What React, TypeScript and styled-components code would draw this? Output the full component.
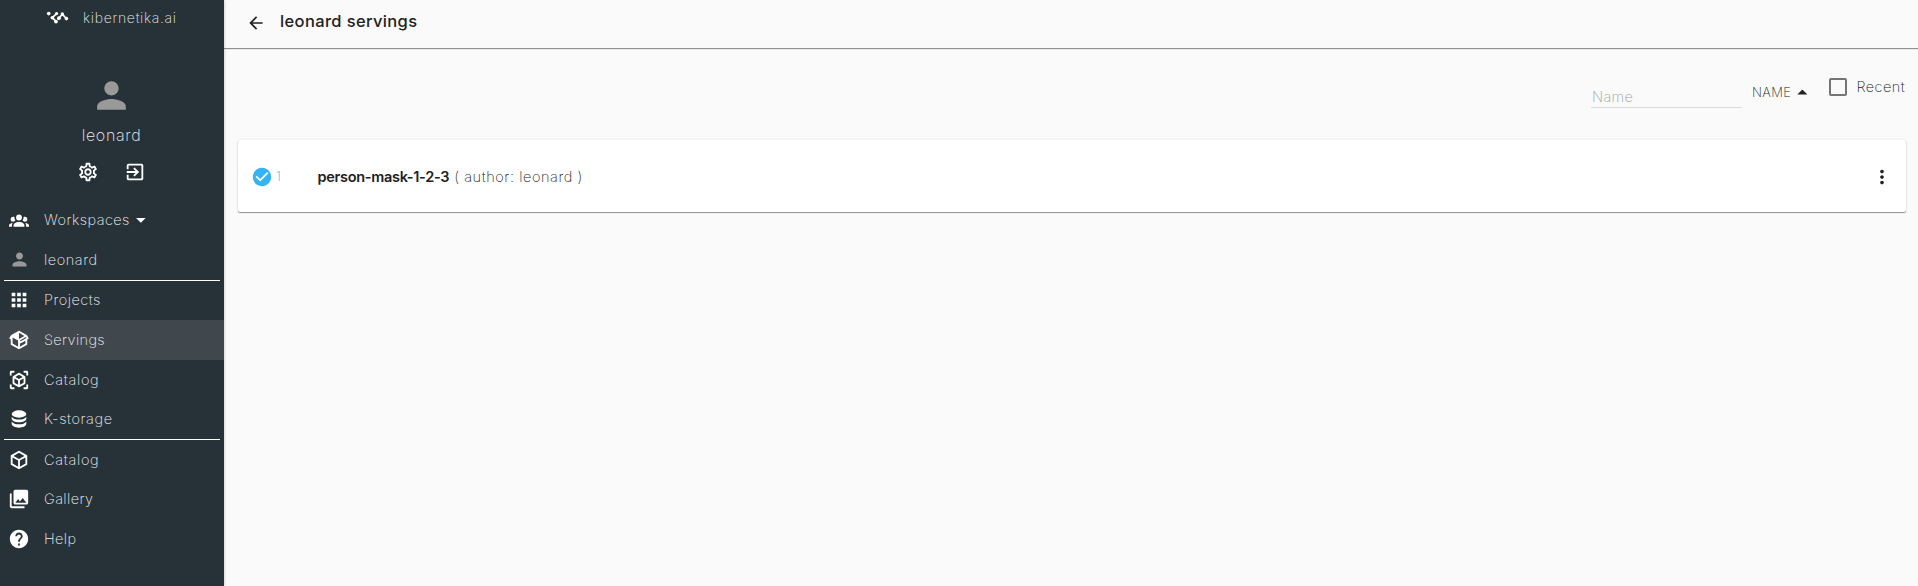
import React from "react";
import styled, { createGlobalStyle } from "styled-components";
import {
  MdArrowBack,
  MdCheckCircle,
  MdExitToApp,
  MdHelp,
  MdMoreVert,
  MdOutlineSettings,
  MdPerson,
  MdPhotoLibrary,
  MdApps,
} from "react-icons/md";

const GlobalStyle = createGlobalStyle`
  * { box-sizing: border-box; }
  html, body { margin: 0; height: 100%; overflow: hidden; }
  body { background: #fafafa; font-family: Inter, "Open Sans", sans-serif; font-weight: 300; color: #212121; }
`;

const Shell = styled.div`
  display: flex;
  height: 100vh;
`;

const Sidebar = styled.aside`
  width: 224px;
  flex: none;
  background: #263238;
  color: #fff;
  box-shadow: 0 0 3px rgba(0, 0, 0, 0.25);
  z-index: 1;
`;

const Label = styled.span<{ $size: number; $spacing?: number; $color?: string; $weight?: number }>`
  font-size: ${(p) => p.$size}px;
  line-height: 20px;
  letter-spacing: ${(p) => p.$spacing ?? 0}px;
  color: ${(p) => p.$color ?? "inherit"};
  font-weight: ${(p) => p.$weight ?? 200};
  white-space: pre;
`;

const Brand = styled.div`
  display: flex;
  align-items: center;
  height: 35px;
  padding-left: 46px;
  gap: 14px;
`;

const Profile = styled.div`
  display: flex;
  flex-direction: column;
  align-items: center;
  height: 165.5px;
  padding: 39px 1px 0 0;
  svg { display: block; }
`;

const ProfileName = styled.div`
  margin-top: 8px;
  height: 20px;
`;

const ProfileActions = styled.div`
  display: flex;
  gap: 25px;
  margin-top: 16px;
`;

const Item = styled.div<{ $active?: boolean }>`
  display: flex;
  align-items: center;
  height: 39.6px;
  background: ${(p) => (p.$active ? "#40484e" : "transparent")};
`;

const ItemIcon = styled.span<{ $muted?: boolean }>`
  display: flex;
  justify-content: center;
  width: 38px;
  margin-right: 6px;
  color: ${(p) => (p.$muted ? "#999" : "#fff")};
`;

const Divider = styled.div`
  height: 1px;
  margin: 0 4px;
  background: #fff;
`;

const Caret = styled.span<{ $up?: boolean }>`
  width: 10px;
  height: 5px;
  background: currentColor;
  clip-path: ${(p) => (p.$up ? "polygon(0 100%, 50% 0, 100% 100%)" : "polygon(0 0, 100% 0, 50% 100%)")};
  margin-left: 6px;
`;

const Main = styled.main`
  flex: 1;
  min-width: 0;
`;

const Header = styled.header`
  display: flex;
  align-items: center;
  height: 48px;
  padding: 0 0 3px 22px;
  gap: 14px;
  box-shadow: 0 1px 1px rgba(0, 0, 0, 0.42);
`;

const Title = styled.h1`
  display: flex;
  margin: 0 0 3px;
`;

const Toolbar = styled.div`
  display: flex;
  justify-content: flex-end;
  height: 92px;
  padding: 28px 13px 0 0;
`;

const SearchField = styled.div`
  width: 151px;
  height: 32px;
  padding: 10px 0 0 1px;
  border-bottom: 1px solid #dcdcdc;
`;

const SortButton = styled.div`
  display: flex;
  align-items: center;
  height: 20px;
  margin: 6px 0 0 10px;
`;

const RecentToggle = styled.label`
  display: flex;
  align-items: center;
  height: 20px;
  margin: 1px 0 0 22px;
  gap: 9px;
`;

const Box = styled.span`
  width: 18px;
  height: 18px;
  border: 2px solid #757575;
  border-radius: 2px;
`;

const Card = styled.section`
  display: flex;
  align-items: center;
  height: 72px;
  margin: 0 12px 0 14px;
  padding: 1px 13px 0 13px;
  background: #fff;
  border-radius: 2px;
  box-shadow: 0 1px 1px rgba(0, 0, 0, 0.4), 0 0 2px rgba(0, 0, 0, 0.16);
`;

const Status = styled.div`
  display: flex;
  align-items: center;
  width: 66.5px;
  gap: 3px;
  color: #33b5f5;
`;

const ServingName = styled.div`
  display: flex;
  flex: 1;
  gap: 5px;
`;

const Logo = () => (
  <svg width="23" height="14" viewBox="0 0 23 14" fill="none" stroke="#fff" strokeLinecap="round" strokeLinejoin="round">
    <path d="M10.5 2.7 6.4 6.6l3.6 3.8M13.1 7.3l3.2-4.2 4.2 4.6" strokeWidth="1.7" />
    <g fill="#fff" stroke="none">
      <circle cx="2.7" cy="2.6" r="1.8" />
      <circle cx="10.6" cy="2.6" r="1.6" />
      <circle cx="6.3" cy="6.7" r="1.8" />
      <circle cx="10" cy="10.6" r="1.9" />
      <circle cx="12.9" cy="7.2" r="1.9" />
      <circle cx="16.3" cy="2.8" r="1.6" />
      <circle cx="20.4" cy="7.6" r="1.8" />
    </g>
  </svg>
);

const Glyph = ({ d, size = 22 }: { d: string; size?: number }) => (
  <svg width={size} height={size} viewBox="0 0 24 24" fill="currentColor" fillRule="evenodd">
    <path d={d} />
  </svg>
);

const groupPath =
  "M12,5.5A3.5,3.5 0 0,1 15.5,9A3.5,3.5 0 0,1 12,12.5A3.5,3.5 0 0,1 8.5,9A3.5,3.5 0 0,1 12,5.5M5,8C5.56,8 6.08,8.15 6.53,8.42C6.38,9.85 6.8,11.27 7.66,12.38C7.16,13.34 6.16,14 5,14A3,3 0 0,1 2,11A3,3 0 0,1 5,8M19,8A3,3 0 0,1 22,11A3,3 0 0,1 19,14C17.84,14 16.84,13.34 16.34,12.38C17.2,11.27 17.62,9.85 17.47,8.42C17.92,8.15 18.44,8 19,8M5.5,18.25C5.5,16.18 8.41,14.5 12,14.5C15.59,14.5 18.5,16.18 18.5,18.25V20H5.5V18.25M0,20V18.5C0,17.11 1.89,15.94 4.45,15.6C3.86,16.28 3.5,17.22 3.5,18.25V20H0M24,20H20.5V18.25C20.5,17.22 20.14,16.28 19.55,15.6C22.11,15.94 24,17.11 24,18.5V20Z";
const scanPath =
  "M17,22V20H20V17H22V20.5C22,20.89 21.84,21.24 21.54,21.54C21.24,21.84 20.89,22 20.5,22H17M7,22H3.5C3.11,22 2.76,21.84 2.46,21.54C2.16,21.24 2,20.89 2,20.5V17H4V20H7V22M17,2H20.5C20.89,2 21.24,2.16 21.54,2.46C21.84,2.76 22,3.11 22,3.5V7H20V4H17V2M7,2V4H4V7H2V3.5C2,3.11 2.16,2.76 2.46,2.46C2.76,2.16 3.11,2 3.5,2H7M13,17.25L17,14.95V10.36L13,12.66V17.25M12,10.92L16,8.63L12,6.28L8,8.63L12,10.92M7,14.95L11,17.25V12.66L7,10.36V14.95M18.23,7.59C18.73,7.91 19,8.34 19,8.91V15.23C19,15.8 18.73,16.23 18.23,16.55L12.75,19.73C12.25,20.05 11.75,20.05 11.25,19.73L5.77,16.55C5.27,16.23 5,15.8 5,15.23V8.91C5,8.34 5.27,7.91 5.77,7.59L11.25,4.41C11.5,4.28 11.75,4.22 12,4.22C12.25,4.22 12.5,4.28 12.75,4.41L18.23,7.59Z";
const packagePath =
  "M2,10.96C1.5,10.68 1.35,10.07 1.63,9.59L3.13,7C3.24,6.8 3.41,6.66 3.6,6.58L11.43,2.18C11.59,2.06 11.79,2 12,2C12.21,2 12.41,2.06 12.57,2.18L20.47,6.62C20.66,6.72 20.82,6.88 20.91,7.08L22.36,9.6C22.64,10.08 22.47,10.69 22,10.96L21,11.54V16.5C21,16.88 20.79,17.21 20.47,17.38L12.57,21.82C12.41,21.94 12.21,22 12,22C11.79,22 11.59,21.94 11.43,21.82L3.53,17.38C3.21,17.21 3,16.88 3,16.5V10.96C2.7,11.13 2.32,11.14 2,10.96M12,4.15V10.85L17.96,7.5L12,4.15M5,15.91L11,19.29V12.58L5,9.21V15.91M19,15.91V12.69L14,15.59C13.67,15.77 13.3,15.76 13,15.6V19.29L19,15.91M13.85,13.36L20.13,9.73L19.55,8.72L13.27,12.35L13.85,13.36Z";
const cubePath =
  "M21,16.5C21,16.88 20.79,17.21 20.47,17.38L12.57,21.82C12.41,21.94 12.21,22 12,22C11.79,22 11.59,21.94 11.43,21.82L3.53,17.38C3.21,17.21 3,16.88 3,16.5V7.5C3,7.12 3.21,6.79 3.53,6.62L11.43,2.18C11.59,2.06 11.79,2 12,2C12.21,2 12.41,2.06 12.57,2.18L20.47,6.62C20.79,6.79 21,7.12 21,7.5V16.5M12,4.15L6.04,7.5L12,10.85L17.96,7.5L12,4.15M5,15.91L11,19.29V12.58L5,9.21V15.91M19,15.91V9.21L13,12.58V19.29L19,15.91Z";

const DatabaseIcon = () => (
  <svg width="16" height="18" viewBox="0 0 16 18" fill="currentColor">
    <ellipse cx="8" cy="4" rx="7.3" ry="3.7" />
    <path d="M.7 6.7C2 8.7 4.7 9.5 8 9.5s6-.8 7.3-2.8v2.1c0 1.9-3.3 3.5-7.3 3.5S.7 10.7 .7 8.8z" />
    <path d="M.7 11.4C2 13.4 4.7 14.3 8 14.3s6-.9 7.3-2.9v2.4c0 2.2-3.3 3.9-7.3 3.9S.7 16 .7 13.8z" />
  </svg>
);

type Entry = { text: string; icon: React.ReactNode; spacing?: number; muted?: boolean; active?: boolean; caret?: boolean };

const groups: Entry[][] = [
  [
    { text: "Workspaces", icon: <Glyph d={groupPath} size={20} />, spacing: 0.45, caret: true },
    { text: "leonard", icon: <MdPerson size={21} />, spacing: 0.55, muted: true },
  ],
  [
    { text: "Projects", icon: <MdApps size={22} />, spacing: 0.5 },
    { text: "Servings", icon: <Glyph d={packagePath} />, spacing: 0.35, active: true },
    { text: "Catalog", icon: <Glyph d={scanPath} />, spacing: 0.7 },
    { text: "K-storage", icon: <DatabaseIcon />, spacing: 0.6 },
  ],
  [
    { text: "Catalog", icon: <Glyph d={cubePath} />, spacing: 0.7 },
    { text: "Gallery", icon: <MdPhotoLibrary size={22} />, spacing: 0.4 },
    { text: "Help", icon: <MdHelp size={22} />, spacing: 0.4 },
  ],
];

export default function App() {
  return (
    <Shell>
      <GlobalStyle />
      <Sidebar>
        <Brand>
          <Logo />
          <Label $size={14} $spacing={0.7} $color="#e8eaeb">kibernetika.ai</Label>
        </Brand>
        <Profile>
          <MdPerson size={43} color="#999" />
          <ProfileName>
            <Label $size={16} $spacing={0.7} $color="#f0f1f2">leonard</Label>
          </ProfileName>
          <ProfileActions>
            <MdOutlineSettings size={22} />
            <MdExitToApp size={22} />
          </ProfileActions>
        </Profile>
        {groups.map((group, g) => (
          <React.Fragment key={g}>
            {g > 0 && <Divider />}
            {group.map((e, i) => (
              <Item key={i} $active={e.active}>
                <ItemIcon $muted={e.muted}>{e.icon}</ItemIcon>
                <Label $size={14.5} $spacing={e.spacing} $color="#f0f1f2">{e.text}</Label>
                {e.caret && <Caret />}
              </Item>
            ))}
          </React.Fragment>
        ))}
      </Sidebar>
      <Main>
        <Header>
          <MdArrowBack size={20} />
          <Title>
            <Label $size={16.5} $spacing={0.36} $weight={500}>leonard servings</Label>
          </Title>
        </Header>
        <Toolbar>
          <SearchField>
            <Label $size={14.5} $spacing={0.35} $color="#a0a0a0">Name</Label>
          </SearchField>
          <SortButton>
            <Label $size={13} $spacing={0.4} $color="#222">NAME</Label>
            <Caret $up />
          </SortButton>
          <RecentToggle>
            <Box />
            <Label $size={14.5} $spacing={0.45} $color="#222">Recent</Label>
          </RecentToggle>
        </Toolbar>
        <Card>
          <Status>
            <MdCheckCircle size={22} />
            <Label $size={12.5}>1</Label>
          </Status>
          <ServingName>
            <Label $size={14.5} $weight={600} $spacing={-0.3}>person-mask-1-2-3</Label>
            <Label $size={14.5} $color="#222" $spacing={0.58}>( author: leonard )</Label>
          </ServingName>
          <MdMoreVert size={22} />
        </Card>
      </Main>
    </Shell>
  );
}
